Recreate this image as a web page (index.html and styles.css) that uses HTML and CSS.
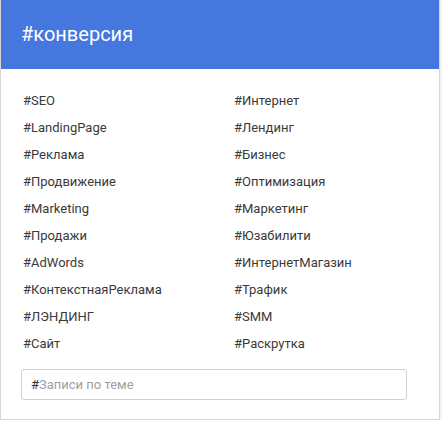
FILE: index.html
```html
<!DOCTYPE html>
<html>
<head>
<meta charset="utf-8">
<link rel="stylesheet" href="styles.css">
</head>
<body>
<div class="card">
  <div class="header">#конверсия</div>
  <div class="body">
    <div class="tags">
      <div class="col">
        <a class="tag">#SEO</a>
        <a class="tag">#LandingPage</a>
        <a class="tag">#Реклама</a>
        <a class="tag">#Продвижение</a>
        <a class="tag">#Marketing</a>
        <a class="tag">#Продажи</a>
        <a class="tag">#AdWords</a>
        <a class="tag">#КонтекстнаяРеклама</a>
        <a class="tag">#ЛЭНДИНГ</a>
        <a class="tag">#Сайт</a>
      </div>
      <div class="col">
        <a class="tag">#Интернет</a>
        <a class="tag">#Лендинг</a>
        <a class="tag">#Бизнес</a>
        <a class="tag">#Оптимизация</a>
        <a class="tag">#Маркетинг</a>
        <a class="tag">#Юзабилити</a>
        <a class="tag">#ИнтернетМагазин</a>
        <a class="tag">#Трафик</a>
        <a class="tag">#SMM</a>
        <a class="tag">#Раскрутка</a>
      </div>
    </div>
    <div class="search">
      <span class="hash">#</span><span class="placeholder">Записи по теме</span>
    </div>
  </div>
</div>
</body>
</html>
```
FILE: styles.css
```css
html, body {
  margin: 0;
  padding: 0;
  background: #ffffff;
}
body {
  font-family: Roboto, "Liberation Sans", Arial, sans-serif;
}
.card {
  width: 438px;
  height: 419px;
  border-left: 1px solid #d6d6d6;
  border-right: 1px solid #d6d6d6;
  border-bottom: 1px solid #d6d6d6;
  background: #fff;
  box-sizing: content-box;
  box-shadow: 2px 0 2px rgba(0,0,0,0.06);
}
.header {
  height: 69px;
  background: #4677df;
  color: #fff;
  font-size: 20px;
  line-height: 69px;
  padding-left: 20px;
  box-sizing: border-box;
}
.body {
  padding: 18px 0 0 0;
}
.tags {
  display: grid;
  grid-template-columns: 211px 1fr;
  padding-left: 22px;
}
.col {
  display: flex;
  flex-direction: column;
}
.tag {
  font-size: 13px;
  line-height: 27px;
  height: 27px;
  color: #3a3a3a;
  text-decoration: none;
}
.search {
  margin: 12px 0 0 20px;
  width: 386px;
  height: 31px;
  border: 1px solid #d2d2d2;
  border-radius: 3px;
  box-sizing: border-box;
  display: flex;
  align-items: center;
  padding-left: 9px;
  font-size: 13px;
}
.hash {
  color: #333;
}
.placeholder {
  color: #a0a0a0;
}
```
